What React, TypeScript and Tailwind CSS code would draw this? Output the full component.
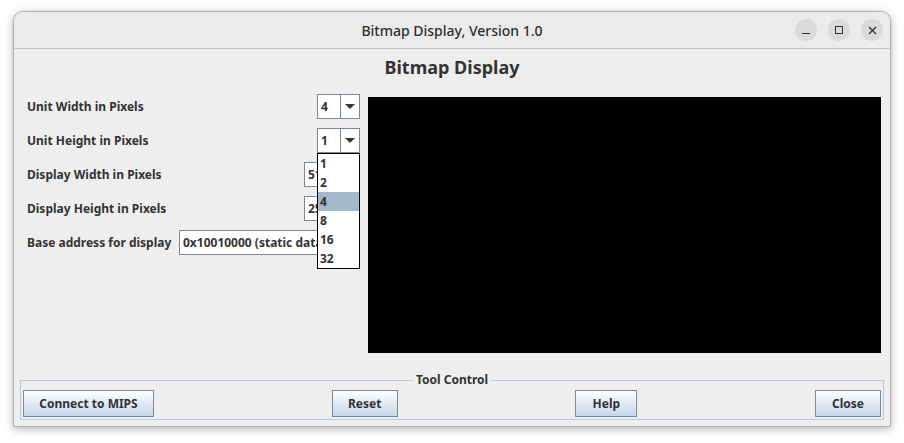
import React from "react";

const font = { fontFamily: '"Noto Sans", "Open Sans", sans-serif' };

function Combo({ value }: { value: string }) {
  return (
    <div className="flex h-[25px] w-[43px] border border-[#7a8a99] bg-white">
      <div className="flex-1 pl-[3px] text-[12px] font-bold leading-[23px] text-[#333]">{value}</div>
      <div className="flex w-[19px] items-center justify-center border-l border-[#7a8a99]">
        <svg width="10" height="6" viewBox="0 0 10 6">
          <path d="M0 0h10L5 5z" fill="#333" />
        </svg>
      </div>
    </div>
  );
}

function Field({ value, width }: { value: string; width: string }) {
  return (
    <div
      className={`h-[25px] ${width} overflow-hidden whitespace-nowrap border border-[#7a8a99] bg-white pl-[3px] text-[12px] font-bold leading-[23px] text-[#333]`}
    >
      {value}
    </div>
  );
}

function Row({ label, children }: { label: string; children: React.ReactNode }) {
  return (
    <div className="flex h-[25px] items-center justify-between">
      <span className="pt-[1px] text-[12px] font-bold text-[#333]">{label}</span>
      {children}
    </div>
  );
}

function Btn({ label, width }: { label: string; width: string }) {
  return (
    <button
      className={`${width} h-[27px] border border-[#7a8a99] bg-gradient-to-b from-white to-[#c4d5e6] text-[12px] font-bold text-[#333]`}
    >
      {label}
    </button>
  );
}

export default function App() {
  const items = ["1", "2", "4", "8", "16", "32"];
  return (
    <div className="h-[443px] w-[904px] bg-white pl-[13px] pt-[11px]" style={font}>
      <div className="flex h-[416px] w-[878px] flex-col overflow-hidden rounded-t-[10px] border border-[#b0b0b0] bg-[#eeeeee] shadow-[0_2px_8px_rgba(0,0,0,0.3)]">
        {/* title bar */}
        <div className="relative flex h-[37px] shrink-0 items-center justify-center border-b border-[#c4c4c4] bg-[#ebebeb]">
          <span className="text-[14px] font-medium text-[#2e2e2e]">Bitmap Display, Version 1.0</span>
          <div className="absolute right-[7px] top-[7px] flex gap-[11px]">
            <div className="flex h-[22px] w-[22px] items-center justify-center rounded-full bg-[#dadada]">
              <div className="mt-[7px] h-[1.5px] w-[8px] bg-[#333]" />
            </div>
            <div className="flex h-[22px] w-[22px] items-center justify-center rounded-full bg-[#dadada]">
              <div className="h-[8px] w-[8px] border border-[#333]" />
            </div>
            <div className="flex h-[22px] w-[22px] items-center justify-center rounded-full bg-[#dadada]">
              <svg width="9" height="9" viewBox="0 0 9 9">
                <path d="M1 1l7 7M8 1L1 8" stroke="#333" strokeWidth="1.4" />
              </svg>
            </div>
          </div>
        </div>

        {/* heading */}
        <div className="flex h-[36px] shrink-0 items-center justify-center text-[18px] font-bold text-[#333]">
          Bitmap Display
        </div>

        {/* main */}
        <div className="mt-[9px] flex flex-1">
          <div className="relative flex w-[354px] flex-col gap-[9px] pl-[13px] pr-[8px]">
            <Row label="Unit Width in Pixels">
              <Combo value="4" />
            </Row>
            <Row label="Unit Height in Pixels">
              <Combo value="1" />
            </Row>
            <Row label="Display Width in Pixels">
              <Field value="512" width="w-[56px]" />
            </Row>
            <Row label="Display Height in Pixels">
              <Field value="256" width="w-[56px]" />
            </Row>
            <Row label="Base address for display">
              <Field value="0x10010000 (static data)" width="w-[181px]" />
            </Row>
            {/* open dropdown list */}
            <div className="absolute left-[303px] top-[59px] w-[43px] border border-black bg-white">
              {items.map((it) => (
                <div
                  key={it}
                  className={`h-[19px] pl-[2px] text-[12px] font-bold leading-[19px] text-[#333] ${
                    it === "4" ? "bg-[#a3b8cc]" : ""
                  }`}
                >
                  {it}
                </div>
              ))}
            </div>
          </div>
          <div className="mt-[3px] h-[256px] w-[513px] bg-black" />
        </div>

        {/* tool control */}
        <div className="shrink-0 px-[6px] pb-[6px]">
          <div className="flex h-[14px]">
            <div className="mt-[7px] flex-1 border-l border-t border-[#b8c8d8]" />
            <span className="px-[3px] text-[12px] font-bold leading-[14px] text-[#333]">Tool Control</span>
            <div className="mt-[7px] flex-1 border-r border-t border-[#b8c8d8]" />
          </div>
          <div className="flex justify-between border-x border-b border-[#b8c8d8] px-[2px] pb-[2px] pt-[3px]">
            <Btn label="Connect to MIPS" width="w-[131px]" />
            <Btn label="Reset" width="w-[66px]" />
            <Btn label="Help" width="w-[62px]" />
            <Btn label="Close" width="w-[66px]" />
          </div>
        </div>
      </div>
    </div>
  );
}
